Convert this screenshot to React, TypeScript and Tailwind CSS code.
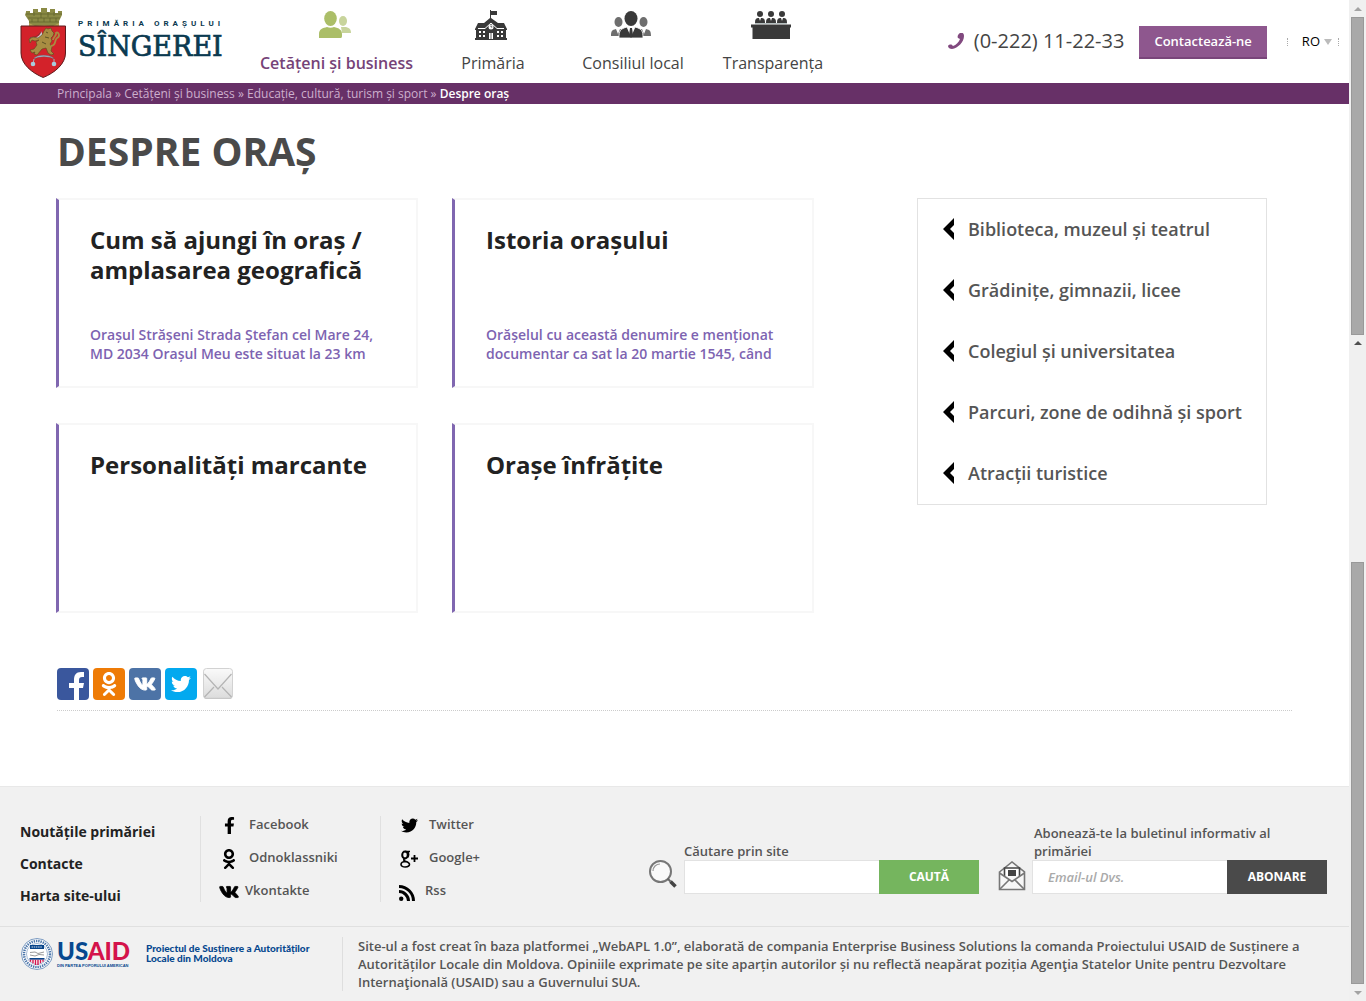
import React from "react";
import { FaFacebookF, FaOdnoklassniki, FaTwitter, FaVk } from "react-icons/fa";

function CoatOfArms() {
  return (
    <svg viewBox="0 0 48 70" className="h-[70px] w-12 shrink-0" aria-hidden="true">
      <path
        d="M6 4V3h4v2h3V1h5v3h3V0h6v4h3V1h5v4h3V3h4v4l-3 6v6H9v-6L5 7z"
        fill="#8a8a45"
      />
      <path d="M6 6h36M8 10h32M9 14h30M14 4v4M21 5v5M28 4v5M34 4v4M12 11v3M18 10v4M24 10v4M30 10v4M36 10v4" stroke="#62652f" strokeWidth=".8" fill="none" />
      <path d="M9 15l6 3 9-1 9 1 6-3v4H9z" fill="#b0a456" />
      <path
        d="M1 18h44.500v27c0 11-11 20-22.300 24.500C12 65 1 56 1 45z"
        fill="#d3222a"
        stroke="#5e1a1c"
        strokeWidth="1"
      />
      <path d="M10 29c4 3 9 3 13-1l-2-5c0 5-5 8-11 6z" fill="#c7d6dc" />
      <path d="M10 29.500c5 0 9-2 11-6" stroke="#5a3a3a" strokeWidth=".6" fill="none" />
      <path
        d="M24 23l2-3 2 1 3-1 1 3 2 2-1 3-2 2 1 3-2 3 2 3-1 4 3 3-3 1-3-2-2-5-4 1-5 6-3-1 1-2-3 1-2-3 4-1 3-4-1-3 3-2-4 1-3-1-2 3-1-4 4-2 5 1 4-3z"
        fill="#a88d42"
        stroke="#594a20"
        strokeWidth=".6"
      />
      <path d="M31 38c6-1 3-6 6-8 4-2 1-7-1-5 1 3-3 4-3 7" fill="none" stroke="#a88d42" strokeWidth="1.800" />
      <path d="M26 24l2 1M25 29l4 1M22 34l4 2" stroke="#5c5224" strokeWidth="1" />
      <path d="M14 51c1-5 18-5 20 0-5-3-15-3-20 0z" fill="#a9cbdc" stroke="#69535a" strokeWidth=".5" />
      <path d="M14 51l-1 5M34 51v5" stroke="#a9cbdc" strokeWidth=".8" />
      <circle cx="13" cy="56" r="2.300" fill="#a9cbdc" />
      <circle cx="34" cy="56" r="2.300" fill="#a9cbdc" />
    </svg>
  );
}

function CitizensIcon() {
  return (
    <svg viewBox="0 0 32 28" className="h-7 w-8" fill="#abbe68" aria-hidden="true">
      <g opacity=".65">
        <ellipse cx="24" cy="10" rx="4" ry="5" />
        <path d="M22 16h5c4 1 5 3 5 6H23z" />
      </g>
      <ellipse cx="11.500" cy="7.500" rx="6.300" ry="7.500" />
      <path d="M0 27v-4c0-5 4-6 8-7 2 1 5 1 7 0 5 1 8 3 8 7v2c0 2-1 2-2 2z" />
    </svg>
  );
}

function TownHallIcon() {
  return (
    <svg viewBox="0 0 32 30" className="-mt-px h-[30px] w-8" aria-hidden="true">
      <path d="M15 0h1v1h6v4h-6v3l7 5h6l3 6v1h-1v8h1v2H0v-2h1v-8H0v-1l3-6h6l6-5z" fill="#393939" />
      <path d="M3 18.500h7l6-5.500 6 5.500h7" fill="none" stroke="#fff" strokeWidth="1" />
      <circle cx="16" cy="17" r="2.500" fill="#fff" />
      <path d="M16 15.500V17h1.300" stroke="#393939" fill="none" strokeWidth=".8" />
      <path d="M4 21h2v2H4zM8 21h2v2H8zM4 25h2v2H4zM8 25h2v2H8zM22 21h2v2h-2zM26 21h2v2h-2zM22 25h2v2h-2zM26 25h2v2h-2zM14 23h4v6h-4z" fill="#fff" />
      <path d="M16 23v6" stroke="#393939" strokeWidth=".8" />
    </svg>
  );
}

function CouncilIcon() {
  return (
    <svg viewBox="0 0 40 28" className="h-7 w-10" aria-hidden="true">
      <g fill="#6e6e6e">
        <ellipse cx="7.500" cy="11" rx="4" ry="5" />
        <ellipse cx="32.500" cy="11" rx="4" ry="5" />
        <path d="M0 25c0-5 1-6 5-7l2 5 2-5 3 1-3 6zM40 25c0-5-1-6-5-7l-2 5-2-5-3 1 3 6z" />
      </g>
      <ellipse cx="20" cy="7.500" rx="6.500" ry="7.500" fill="#393939" />
      <path d="M8 27c0-7 1-9 8-11l4 9 4-9c7 2 8 4 8 11z" fill="#393939" stroke="#fff" strokeWidth=".8" />
      <path d="M16 15l4 9 4-9z" fill="#fff" />
      <path d="M19 17h2l1 7-2 3-2-3z" fill="#393939" />
    </svg>
  );
}

function PanelIcon() {
  return (
    <svg viewBox="0 0 40 28" className="h-7 w-10" aria-hidden="true">
      {[9, 20, 31].map((x) => (
        <g key={x} transform={`translate(${x} 0)`}>
          <circle cx="0" cy="3" r="3" fill="#393939" />
          <path d="M-5 12c0-4 1-5 4-5h2c3 0 4 1 4 5z" fill="#393939" />
          <path d="M-1 7L0 10l1-3z" fill="#fff" />
        </g>
      ))}
      <path d="M4 12.500h32" stroke="#b5bfbf" />
      <path d="M0 13.500h40v3h-1v11.500H1.500V16.500H0z" fill="#393939" />
    </svg>
  );
}

function MailIcon() {
  return (
    <svg viewBox="0 0 32 32" className="size-8" aria-hidden="true">
      <defs>
        <linearGradient id="paper" x1="0" y1="0" x2="0" y2="1">
          <stop offset="0" stopColor="#fafafa" />
          <stop offset="1" stopColor="#dcdcdc" />
        </linearGradient>
      </defs>
      <rect x="2.500" y="1" width="29" height="30" rx="3" fill="#bdbdbd" />
      <rect x="2.500" y=".5" width="29" height="29.500" rx="3" fill="url(#paper)" stroke="#d2d2d2" />
      <path d="M3.500 6L17 21 30.500 6M3.500 29l9.500-10M30.500 29L21 19" fill="none" stroke="#b4b4b4" strokeWidth="1.200" />
    </svg>
  );
}

function UsaidSeal() {
  return (
    <svg viewBox="0 0 32 32" className="size-8 shrink-0" aria-hidden="true">
      <circle cx="16" cy="16" r="15.500" fill="#fff" stroke="#5c83b3" strokeWidth=".8" />
      <circle cx="16" cy="16" r="13" fill="none" stroke="#4c76aa" strokeWidth="2.500" strokeDasharray="1.400 .9" />
      <circle cx="16" cy="16" r="10.500" fill="#fff" stroke="#7d9cc3" strokeWidth=".7" />
      <path d="M9 7h14v4H9z" fill="#07448a" />
      <path d="M10.500 9h11" stroke="#d5e0ee" strokeWidth="1.200" strokeDasharray="1.500 .7" />
      <path d="M9 14.500l5-.5 3 1.500 6-1.500M9 17l5 1 4-1.500 5 .5" stroke="#999" fill="none" />
      <path d="M8.500 20h15v1.700h-15z" fill="#07448a" />
      <path d="M9.500 21.700v2M12 21.700v3.500M14.500 21.700V27M17 21.700V27M19.500 21.700v3.500M22 21.700v2" stroke="#d4134b" strokeWidth="1.400" />
    </svg>
  );
}

const navItems = [
  { label: "Cetățeni și business", icon: <CitizensIcon />, box: "w-[193px]", text: "font-semibold text-[#764378]" },
  { label: "Primăria", icon: <TownHallIcon />, box: "w-[120px]", text: "text-[#444]" },
  { label: "Consiliul local", icon: <CouncilIcon />, box: "w-[160px]", text: "text-[#444]" },
  { label: "Transparența", icon: <PanelIcon />, box: "w-[120px]", text: "text-[#444]" },
];

function Header() {
  return (
    <header className="flex h-[83px] items-start whitespace-nowrap">
      <a href="#" className="flex w-[240px] shrink-0 gap-2.5 pt-2 pl-5 text-[#0b3a50]">
        <CoatOfArms />
        <span className="flex flex-col pt-[11px] font-['Roboto']">
          <span className="text-[8px] leading-[10px] font-bold tracking-[4px]">PRIMĂRIA ORAȘULUI</span>
          <span className="font-['DejaVu_Serif'] text-[27px] leading-[36px] [-webkit-text-stroke:0.7px]">SÎNGEREI</span>
        </span>
      </a>
      <nav className="flex">
        {navItems.map((item) => (
          <a key={item.label} href="#" className={`flex flex-col items-center pt-[11px] ${item.box}`}>
            <span className="flex h-[30px] items-start pr-1">{item.icon}</span>
            <span className={`mt-2.5 text-base leading-6 ${item.text}`}>{item.label}</span>
          </a>
        ))}
      </nav>
      <div className="ml-auto flex items-start pt-[26px] pr-2.5">
        <span className="flex h-[30px] items-center gap-2.5 text-xl text-[#444]">
          <svg viewBox="0 0 16 16" className="size-4" aria-hidden="true">
            <path
              d="M12 0c3-1 4 1 4 3 0 6-6 12-12 13-2 0-4-1-4-3 0-1 3-2 4-1l1 1c3-1 6-4 7-7l-2-1c-1-1 0-4 2-5z"
              fill="#81497f"
            />
          </svg>
          (0-222) 11-22-33
        </span>
        <button className="ml-[15px] h-[33px] border-b-2 border-[#79457a] bg-[#8e578e] px-[15px] text-[13px] font-semibold text-white">
          Contactează-ne
        </button>
        <button className="mt-2.5 ml-5 flex h-3 items-center gap-1 text-[13px] text-black">
          <span className="mr-2.5 h-2 border-l border-dotted border-[#aaa]" />
          RO
          <span className="border-x-4 border-t-[6px] border-x-transparent border-t-[#bbb]" />
          <span className="ml-0.5 h-2 border-l border-dotted border-[#aaa]" />
        </button>
      </div>
    </header>
  );
}

function Breadcrumbs() {
  return (
    <nav className="h-[21px] bg-[#673067] px-[57px] text-xs leading-[21px] text-[#cdafcd]">
      <a href="#">Principala</a> » <a href="#">Cetățeni și business</a> »{" "}
      <a href="#">Educație, cultură, turism și sport</a> » <span className="font-semibold text-white">Despre oraș</span>
    </nav>
  );
}

const cards = [
  {
    title: "Cum să ajungi în oraș / amplasarea geografică",
    text: "Orașul Strășeni Strada Ștefan cel Mare 24, MD 2034 Orașul Meu este situat la 23 km",
  },
  {
    title: "Istoria orașului",
    text: "Orășelul cu această denumire e menționat documentar ca sat la 20 martie 1545, când",
  },
  { title: "Personalități marcante", text: "" },
  { title: "Orașe înfrățite", text: "" },
];

function Cards() {
  return (
    <div className="grid flex-1 grid-cols-2 gap-x-[34px] gap-y-[35px]">
      {cards.map((card) => (
        <a
          key={card.title}
          href="#"
          className="flex h-[190px] flex-col justify-between border-2 border-l-[3px] border-[#f7f7f7] border-l-[#8067b0] pt-[25px] pr-8 pb-[23px] pl-[31px]"
        >
          <h2 className="text-2xl leading-[30px] font-bold text-[#222]">{card.title}</h2>
          <p className="text-sm leading-[19px] font-semibold text-[#7d63b1]">{card.text}</p>
        </a>
      ))}
    </div>
  );
}

const related = [
  "Biblioteca, muzeul și teatrul",
  "Grădinițe, gimnazii, licee",
  "Colegiul și universitatea",
  "Parcuri, zone de odihnă și sport",
  "Atracții turistice",
];

function Sidebar() {
  return (
    <aside className="w-[350px] shrink-0 self-start border border-[#e2e2e2]">
      {related.map((label) => (
        <a key={label} href="#" className="flex h-[61px] items-center gap-3 pb-0.5 pl-[25px] text-lg font-semibold whitespace-nowrap text-[#555]">
          <svg viewBox="0 0 13 22" className="h-[22px] w-[13px]" aria-hidden="true">
            <path d="M11 0v7l-4 4 4 4v7L0 11z" fill="#000" />
          </svg>
          {label}
        </a>
      ))}
    </aside>
  );
}

function ShareBar() {
  return (
    <div className="flex gap-1 border-b border-dotted border-[#ccc] pb-2.5 text-white">
      <a href="#" aria-label="Facebook" className="flex size-8 items-end justify-end overflow-hidden rounded bg-[#3a579d] pr-1">
        <svg viewBox="0 0 16 28" className="h-7 w-4" aria-hidden="true">
          <path d="M5 28V16H0v-5h5V8c0-5 2-8 7-8h3v5h-2c-2 0-3 1-3 3v3h5l-1 5h-4v12z" fill="currentColor" />
        </svg>
      </a>
      <a href="#" aria-label="Odnoklassniki" className="flex size-8 items-center justify-center rounded bg-[#ee7b06]">
        <FaOdnoklassniki className="size-6" />
      </a>
      <a href="#" aria-label="Vkontakte" className="flex size-8 items-center justify-center rounded bg-[#4d73a6]">
        <FaVk className="size-[22px] stroke-white stroke-[24px]" />
      </a>
      <a href="#" aria-label="Twitter" className="flex size-8 items-center justify-center rounded bg-[#03a9ef]">
        <FaTwitter className="size-5" />
      </a>
      <a href="#" aria-label="Email">
        <MailIcon />
      </a>
    </div>
  );
}

function GooglePlusIcon() {
  return (
    <svg viewBox="0 0 18 18" className="h-[18px] w-[18px]" fill="none" stroke="#000" aria-hidden="true">
      <ellipse cx="5" cy="5" rx="2.800" ry="3.400" strokeWidth="2" />
      <path d="M5 1.500h5M7.500 1.500c1.500 2 1.500 4 0 6M5 8.500c-2 1-1.500 2 .5 2.800 2 .7 4 1.500 4 3 0 3.500-8.500 3.500-8.500.2 0-2 2-3 5-3" strokeWidth="1.600" />
      <path d="M11 8.500h7M14.500 5v7" strokeWidth="1.800" />
    </svg>
  );
}

function RssIcon() {
  return (
    <svg viewBox="0 0 16 16" className="size-4" aria-hidden="true">
      <circle cx="2.200" cy="13.800" r="2.200" />
      <path d="M0 6.500c5 0 9.500 4.500 9.500 9.500M0 1.500C8 1.500 14.500 8 14.500 16" fill="none" stroke="#000" strokeWidth="3" />
    </svg>
  );
}

function SocialLink({ icon, label }: { icon: React.ReactNode; label: string }) {
  return (
    <a href="#" className="flex h-[17px] items-center gap-2.5">
      <span className="flex w-5 justify-center pt-0.5 text-black">{icon}</span>
      {label}
    </a>
  );
}

function Footer() {
  return (
    <footer className="flex-1 border-t border-[#e8e8e8] bg-[#f1f1f1] font-semibold text-[#555]">
      <div className="flex pt-[29px] pr-[22px] pb-5 pl-5">
        <ul className="flex w-[180px] shrink-0 flex-col gap-3 pt-1.5 text-sm leading-5 font-bold text-[#222]">
          <li><a href="#">Noutățile primăriei</a></li>
          <li><a href="#">Contacte</a></li>
          <li><a href="#">Harta site-ului</a></li>
        </ul>
        <div className="flex h-[86px] w-[180px] shrink-0 flex-col gap-4 border-l border-[#e0e0e0] pl-[18px] text-[13px]">
          <SocialLink icon={<FaFacebookF className="size-[17px]" />} label="Facebook" />
          <SocialLink icon={<FaOdnoklassniki className="size-5" />} label="Odnoklassniki" />
          <a href="#" className="flex h-[17px] items-center gap-1.5">
            <FaVk className="mt-0.5 size-5 stroke-black stroke-[24px] text-black" />
            Vkontakte
          </a>
        </div>
        <div className="flex h-[86px] flex-col gap-4 border-l border-[#e0e0e0] pl-[18px] text-[13px]">
          <SocialLink icon={<FaTwitter className="size-[17px]" />} label="Twitter" />
          <SocialLink icon={<GooglePlusIcon />} label="Google+" />
          <a href="#" className="flex h-[17px] items-center gap-2.5">
            <span className="pt-1"><RssIcon /></span>
            Rss
          </a>
        </div>
        <form className="ml-auto flex items-end gap-[7px] self-end pb-3 text-[13px] leading-[18px]">
          <svg viewBox="0 0 28 28" className="mb-1.5 size-7" fill="none" aria-hidden="true">
            <circle cx="11.500" cy="11.500" r="10.500" fill="#fafafa" stroke="#777" strokeWidth="2" />
            <path d="M4 11c0-4 3-7 7-7" stroke="#999" strokeWidth="1.200" />
            <path d="M18.500 18.500l3 3" stroke="#666" strokeWidth="2" />
            <path d="M21.500 21.500l5 5" stroke="#444" strokeWidth="3.500" />
          </svg>
          <div>
            <label htmlFor="search">Căutare prin site</label>
            <div className="flex h-[34px]">
              <input id="search" type="text" className="w-[195px] border border-r-0 border-[#e2e2e2] bg-white px-[15px]" />
              <button type="button" className="w-[100px] bg-[#75b55e] text-xs font-bold text-white">CAUTĂ</button>
            </div>
          </div>
        </form>
        <form className="ml-[19px] flex items-end gap-1.5 self-end pb-3 text-[13px] leading-[18px]">
          <svg viewBox="0 0 28 30" className="mb-[3px] h-[30px] w-7" fill="none" stroke="#777" strokeWidth="1.600" aria-hidden="true">
            <path d="M1.500 11L14 1l12.500 10v17.500h-25z" fill="#f7f7f7" />
            <path d="M6.500 15V7h15v8" stroke="#444" fill="#fff" />
            <path d="M1.500 12L14 20.500 26.500 12M2 28l9-9M26 28l-9-9" />
            <path d="M10 9h8v6h-8z" fill="#444" stroke="none" />
          </svg>
          <div className="w-[295px]">
            <label htmlFor="email" className="block w-[260px] pl-0.5">Abonează-te la buletinul informativ al primăriei</label>
            <div className="flex h-[34px]">
              <input
                id="email"
                type="email"
                placeholder="Email-ul Dvs."
                className="w-[195px] border border-r-0 border-[#e2e2e2] bg-white px-[15px] placeholder:text-[#aaa] placeholder:italic"
              />
              <button type="button" className="w-[100px] bg-[#4a4a4a] text-xs font-bold text-white">ABONARE</button>
            </div>
          </div>
        </form>
      </div>
      <div className="flex border-t border-[#e0e0e0] pt-2.5 pr-[42px] pb-2.5 pl-[21px]">
        <a href="#" className="flex w-[321px] shrink-0 items-start pt-px font-['Lato'] text-[#07488f]">
          <UsaidSeal />
          <span className="ml-1 w-[85px] pt-0.5">
            <span className="block text-2xl leading-[22px] font-black">US<span className="text-[#d4134b]">AID</span></span>
            <span className="block pt-0.5 font-['Liberation_Sans'] text-[4px] leading-[4px] whitespace-nowrap">DIN PARTEA POPORULUI AMERICAN</span>
          </span>
          <span className="ml-1 pt-[5px] text-[10px] leading-[10px] font-black whitespace-nowrap">
            Proiectul de Susținere a Autorităților
            <br />
            Locale din Moldova
          </span>
        </a>
        <p className="border-l border-[#dedede] pl-[15px] text-[13px] leading-[18px]">
          Site-ul a fost creat în baza platformei „WebAPL 1.0”, elaborată de compania Enterprise Business Solutions la comanda
          Proiectului USAID de Susținere a Autorităților Locale din Moldova. Opiniile exprimate pe site aparțin autorilor și nu
          reflectă neapărat poziția Agenţia Statelor Unite pentru Dezvoltare Internaţională (USAID) sau a Guvernului SUA.
        </p>
      </div>
    </footer>
  );
}

function Scrollbar() {
  return (
    <div className="flex w-[17px] shrink-0 flex-col items-center bg-[#f0f0f0]" aria-hidden="true">
      <div className="flex h-[17px] items-center"><span className="border-x-4 border-b-4 border-x-transparent border-b-[#a3a3a3]" /></div>
      <div className="w-[13px] flex-[317] border border-[#999] bg-[#a9a9a9]" />
      <div className="flex h-[17px] items-center"><span className="border-x-4 border-b-4 border-x-transparent border-b-[#505050]" /></div>
      <div className="flex-[211]" />
      <div className="w-[13px] flex-[422] border border-[#999] bg-[#a9a9a9]" />
      <div className="flex h-[17px] items-center"><span className="border-x-4 border-t-4 border-x-transparent border-t-[#a3a3a3]" /></div>
    </div>
  );
}

export default function App() {
  return (
    <div className="flex min-h-screen bg-white font-['Open_Sans',sans-serif]">
      <div className="flex min-w-0 flex-1 flex-col">
        <Header />
        <Breadcrumbs />
        <main className="px-[57px] pb-[75px]">
          <h1 className="pt-[19px] text-[39px] leading-[56px] font-bold text-[#4a4a4a]">DESPRE ORAȘ</h1>
          <div className="mt-[19px] mb-[55px] -ml-px flex gap-[103px] pr-[25px]">
            <Cards />
            <Sidebar />
          </div>
          <ShareBar />
        </main>
        <Footer />
      </div>
      <Scrollbar />
    </div>
  );
}
